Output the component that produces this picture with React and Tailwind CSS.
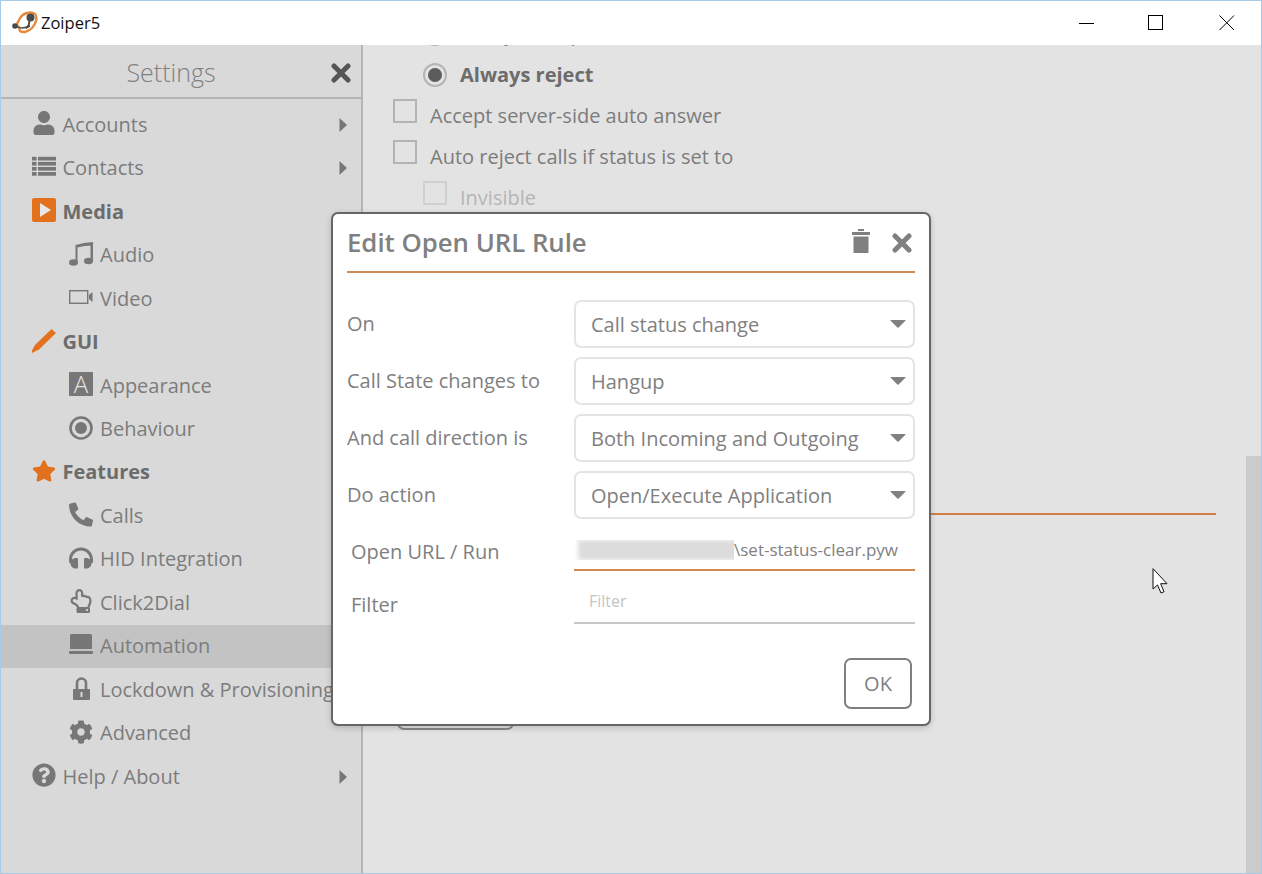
import React from 'react';
import {
  FaUser, FaStar, FaPhone, FaHeadphones,
  FaRegHandPointUp, FaCog, FaQuestionCircle,
} from 'react-icons/fa';

const MediaIcon = () => (
  <svg width="24" height="24" viewBox="0 0 24 24">
    <rect width="24" height="24" rx="2" fill="#e2711d" />
    <path d="M8 5l11 7-11 7z" fill="#e8e8e8" />
  </svg>
);

const ListIcon = () => (
  <svg width="26" height="21" viewBox="0 0 26 21" fill="#777">
    <rect y="0" width="5" height="4" />
    <rect x="6.500" y="0" width="19.500" height="4" />
    <rect y="5.500" width="5" height="4" />
    <rect x="6.500" y="5.500" width="19.500" height="4" />
    <rect y="11" width="5" height="4" />
    <rect x="6.500" y="11" width="19.500" height="4" />
    <rect y="16.500" width="5" height="4" />
    <rect x="6.500" y="16.500" width="19.500" height="4" />
  </svg>
);

const MusicIcon = () => (
  <svg width="24" height="24" viewBox="0 0 24 24" fill="#777">
    <path d="M6.500 3Q15 .5 24 0V3.500Q15 3.500 8.500 5.500V20.500H6.500z" />
    <rect x="21.500" y="1" width="2.500" height="18" />
    <ellipse cx="4.500" cy="20.500" rx="4.500" ry="3.200" />
    <ellipse cx="19.500" cy="19" rx="4.500" ry="3.200" />
  </svg>
);

const VideoIcon = () => (
  <svg width="24" height="14" viewBox="0 0 24 14">
    <rect x=".7" y=".7" width="18" height="12.600" fill="none" stroke="#777" strokeWidth="1.400" />
    <path d="M20 5l3.500-3v10L20 9z" fill="#777" />
  </svg>
);

const PencilIcon = () => (
  <svg width="24" height="24" viewBox="0 0 24 24">
    <path d="M19.500 0L24 4 7 20.500 0 24v-2.500L3 16z" fill="#e2711d" />
  </svg>
);

const LetterIcon = () => (
  <div className="w-6 h-6 bg-[#777777] rounded-[1px] flex items-center justify-center text-[#e4e4e4] text-[24px] font-light leading-none">A</div>
);

const RingIcon = () => (
  <svg width="24" height="24" viewBox="0 0 24 24">
    <circle cx="12" cy="12" r="10.500" fill="none" stroke="#777" strokeWidth="2.600" />
    <circle cx="12" cy="12" r="6" fill="#777" />
  </svg>
);

const LaptopIcon = () => (
  <svg width="24" height="21" viewBox="0 0 24 21">
    <path d="M1 1.500A1.500 1.500 0 0 1 2.500 0h19A1.500 1.500 0 0 1 23 1.500V15H1z" fill="#777" />
    <rect y="17" width="24" height="3" rx="1" fill="#777" />
  </svg>
);

const LockIcon = () => (
  <svg width="17" height="23" viewBox="0 0 17 23">
    <path d="M4 12V6a4.500 4.500 0 0 1 9 0v6" fill="none" stroke="#777" strokeWidth="2.600" />
    <path fillRule="evenodd" d="M1 12h15a1 1 0 0 1 1 1v9a1 1 0 0 1-1 1H1a1 1 0 0 1-1-1v-9a1 1 0 0 1 1-1zM7.500 15v5h2v-5z" fill="#777" />
  </svg>
);

const Caret = () => (
  <svg className="ml-auto" width="8" height="14" viewBox="0 0 8 14">
    <path d="M.5 0L8 7 .5 14z" fill="#777" />
  </svg>
);

const CloseX = ({ color }) => (
  <svg width="20" height="20" viewBox="0 0 20 20">
    <path d="M3 3l14 14M17 3L3 17" fill="none" stroke={color} strokeWidth="5" strokeLinecap="round" />
  </svg>
);

const TrashIcon = () => (
  <svg width="18" height="24" viewBox="0 0 18 24" fill="#808080">
    <rect x="6" y="0" width="6" height="2" />
    <rect x="0" y="3" width="18" height="3" />
    <rect x="1.500" y="7.500" width="15" height="16.500" />
  </svg>
);

const menu = [
  { label: 'Accounts', icon: <FaUser size={24} />, arrow: true },
  { label: 'Contacts', icon: <ListIcon />, arrow: true },
  { label: 'Media', icon: <MediaIcon />, bold: true },
  { label: 'Audio', icon: <MusicIcon />, sub: true },
  { label: 'Video', icon: <VideoIcon />, sub: true },
  { label: 'GUI', icon: <PencilIcon />, bold: true },
  { label: 'Appearance', icon: <LetterIcon />, sub: true },
  { label: 'Behaviour', icon: <RingIcon />, sub: true },
  { label: 'Features', icon: <FaStar size={24} className="text-[#e2711d]" />, bold: true },
  { label: 'Calls', icon: <FaPhone size={25} className="scale-x-[-1]" />, sub: true },
  { label: 'HID Integration', icon: <FaHeadphones size={24} />, sub: true },
  { label: 'Click2Dial', icon: <FaRegHandPointUp size={24} />, sub: true },
  { label: 'Automation', icon: <LaptopIcon />, sub: true, active: true },
  { label: 'Lockdown & Provisioning', icon: <LockIcon />, sub: true },
  { label: 'Advanced', icon: <FaCog size={24} />, sub: true },
  { label: 'Help / About', icon: <FaQuestionCircle size={24} />, arrow: true },
];

const MenuRow = ({ item }) => (
  <div className={`h-[43.47px] flex items-center shrink-0 pr-[14px] ${item.active ? 'bg-[#c3c3c3]' : ''} ${item.sub ? 'pl-[68px]' : 'pl-[31px]'}`}>
    <div className="w-6 flex justify-center text-[#777777] -mt-[3px]">{item.icon}</div>
    <span className={`text-[20px] whitespace-nowrap ${item.sub ? 'ml-[7px]' : 'ml-[6.500px]'} ${item.bold ? 'font-bold text-[#6c6c6c]' : 'text-[#7c7c7c]'}`}>{item.label}</span>
    {item.arrow && <Caret />}
  </div>
);

const Logo = () => (
  <svg width="26" height="24" viewBox="0 0 26 24">
    <path d="M8 7C11 2 19 0 23 3c3 3 1 10-3 14-4 4-9 5-12 3-1-1 0-3-1-4-2-1-3-2-1-5z" fill="none" stroke="#e58a3c" strokeWidth="2.400" />
    <circle cx="18.500" cy="6.500" r="4" fill="#4a4a4a" />
    <path d="M17 10c1 3-1 6-3 7" fill="none" stroke="#4a4a4a" strokeWidth="2" />
    <circle cx="3" cy="15" r="2.800" fill="#4a4a4a" />
    <path d="M3 15c3 2 9 3 15 0" fill="none" stroke="#4a4a4a" strokeWidth="1.500" />
  </svg>
);

const Check = ({ light }) => (
  <div className={`w-6 h-6 border-2 shrink-0 -mt-[9px] ${light ? 'border-[#d0d0d0]' : 'border-[#b4b4b4]'}`} />
);

const Select = ({ value }) => (
  <div className="w-[341px] h-12 border-2 border-[#e4e4e4] rounded-[7px] flex items-center pl-[15px] pr-[7px] text-[20px] text-[#808080]">
    <span className="pt-[1px]">{value}</span>
    <svg className="ml-auto" width="16" height="8" viewBox="0 0 16 8">
      <path d="M1 0h14q1 0 .4 .8L8.600 7.500q-.6 .5-1.200 0L.6 .8Q0 0 1 0z" fill="#808080" />
    </svg>
  </div>
);

const rules = [
  ['On', 'Call status change'],
  ['Call State changes to', 'Hangup'],
  ['And call direction is', 'Both Incoming and Outgoing'],
  ['Do action', 'Open/Execute Application'],
];

export default function App() {
  return (
    <div className="relative w-[1262px] h-[874px] border border-[#a6cbe8] flex flex-col overflow-hidden bg-white font-['Open_Sans',sans-serif]">
      {/* title bar */}
      <div className="h-11 shrink-0 flex items-center pl-[11px] bg-white">
        <Logo />
        <span className="ml-[3px] pt-[1px] text-[16.500px] text-[#111111]">Zoiper5</span>
        <div className="ml-auto flex items-center">
          <svg className="mr-[53px]" width="16" height="16" viewBox="0 0 16 16"><path d="M0 8.500h15" stroke="#000" /></svg>
          <svg className="mr-[55px]" width="16" height="16" viewBox="0 0 16 16"><rect x=".5" y=".5" width="14" height="14" fill="none" stroke="#000" /></svg>
          <svg className="mr-[26px]" width="16" height="16" viewBox="0 0 16 16"><path d="M.5 .5l14.500 14.500M15 .5L.5 15" stroke="#000" /></svg>
        </div>
      </div>

      <div className="flex-1 flex min-h-0">
        {/* sidebar */}
        <div className="w-[362px] shrink-0 bg-[#d9d9d9] border-r-2 border-[#b5b5b5] flex flex-col">
          <div className="h-[54px] shrink-0 border-b-2 border-[#b5b5b5] flex items-center relative">
            <span className="w-full pr-[20px] pt-[3px] text-center text-[25px] font-light text-[#808080]">Settings</span>
            <div className="absolute right-[10px] top-[18px]"><CloseX color="#555555" /></div>
          </div>
          <div className="pt-[4px] flex flex-col">
            {menu.map((item) => <MenuRow key={item.label} item={item} />)}
          </div>
        </div>

        {/* settings page, scrolled behind the dialog */}
        <div className="flex-1 flex bg-[#e3e3e3] min-w-0">
          <div className="flex-1 overflow-hidden pl-[30px] pr-[30px] text-[20px] text-[#7c7c7c]">
            <div className="-mt-[32px]">
              <div className="h-[41px] flex items-center pl-[30px]">
                <div className="w-6 h-6 rounded-full border-2 border-[#b4b4b4]" />
                <span className="ml-[13px]">Always accept</span>
              </div>
              <div className="h-[41px] flex items-center pl-[30px]">
                <div className="w-6 h-6 rounded-full border-2 border-[#b4b4b4] flex items-center justify-center">
                  <div className="w-3.5 h-3.5 rounded-full bg-[#5c5c5c]" />
                </div>
                <span className="ml-[13px] font-bold text-[#6c6c6c]">Always reject</span>
              </div>
              <div className="h-[41px] flex items-center">
                <Check />
                <span className="ml-[13px]">Accept server-side auto answer</span>
              </div>
              <div className="h-[41px] flex items-center">
                <Check />
                <span className="ml-[13px]">Auto reject calls if status is set to</span>
              </div>
              <div className="h-[41px] flex items-center pl-[30px] text-[#b5b5b5]">
                <Check light />
                <span className="ml-[13px]">Invisible</span>
              </div>
              <div className="mt-[295px] h-[2px] bg-[#d17f45]" />
              <div className="mt-[173px] ml-[4px] w-[117px] h-[42px] border-2 border-[#8a8a8a] rounded-[7px]" />
            </div>
          </div>
          <div className="w-[15px] shrink-0 flex flex-col">
            <div className="mt-[411px] flex-1 bg-[#cbcbcb]" />
          </div>
        </div>
      </div>

      {/* dialog */}
      <div className="absolute left-[330px] top-[211px] w-[600px] h-[514px] bg-white border-2 border-[#666666] rounded-[7px] shadow-[0_2px_6px_rgba(0,0,0,0.18)] pl-[14px] pr-[14px] flex flex-col">
        <div className="h-[59px] shrink-0 border-b-2 border-[#d08a52] flex items-center text-[#808080]">
          <span className="text-[25.750px] font-semibold">Edit Open URL Rule</span>
          <div className="ml-auto mr-[22px] -mt-[3px]"><TrashIcon /></div>
          <div className="mr-[3px]"><CloseX color="#808080" /></div>
        </div>
        <div className="mt-[27px] flex flex-col gap-[9px]">
          {rules.map(([label, value]) => (
            <div key={label} className="flex items-center justify-between">
              <span className="text-[20px] text-[#808080] -mt-[1px]">{label}</span>
              <Select value={value} />
            </div>
          ))}
        </div>
        <div className="mt-[19px] h-[33px] flex justify-between pl-[4px]">
          <span className="text-[20px] text-[#808080] -mt-[1px]">Open URL / Run</span>
          <div className="w-[341px] border-b-2 border-[#d08a52] flex items-start pt-[2px]">
            <div className="w-[160px] h-[20px] overflow-hidden pl-[4px]">
              <div className="w-[170px] h-[20px] bg-[#dcdcdc] blur-[2px]" />
            </div>
            <span className="text-[17px] text-[#808080] leading-[20px]">\set-status-clear.pyw</span>
          </div>
        </div>
        <div className="mt-[18px] h-[35px] flex justify-between pl-[4px]">
          <span className="text-[20px] text-[#808080] mt-[1px]">Filter</span>
          <div className="w-[341px] border-b-2 border-[#c8c8c8] pl-[15px] text-[16px] text-[#c4c4c4]">Filter</div>
        </div>
        <div className="mt-[34px] flex justify-end pr-[3px]">
          <div className="w-[68px] h-[51px] border-2 border-[#808080] rounded-[7px] flex items-center justify-center pt-[1px] text-[20px] text-[#808080]">OK</div>
        </div>
      </div>

      {/* mouse pointer */}
      <svg className="absolute left-[1151px] top-[567px]" width="20" height="29" viewBox="0 0 20 29">
        <path d="M1 .7V21l4.500-4 3.500 8 3-1.300-3.400-8H15z" fill="#fff" stroke="#111" strokeWidth="1" />
      </svg>
    </div>
  );
}
